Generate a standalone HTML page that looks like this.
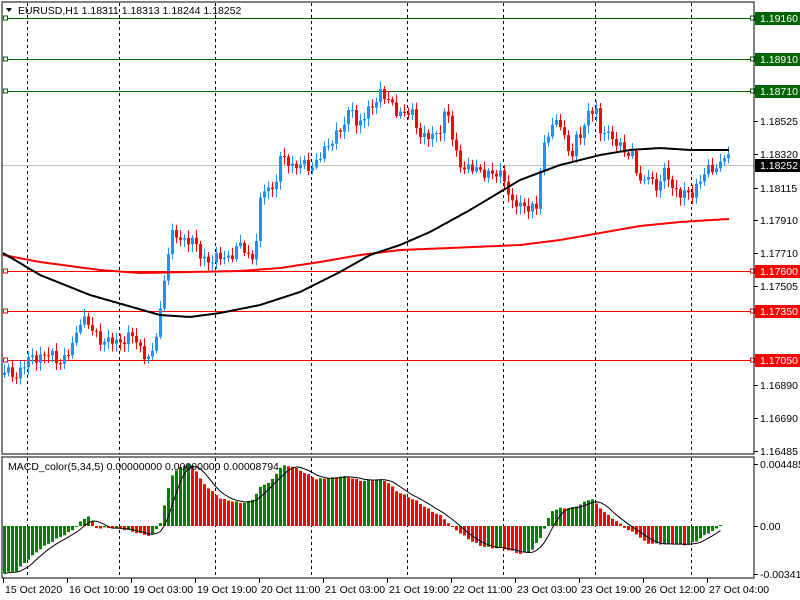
<!DOCTYPE html>
<html><head><meta charset="utf-8">
<style>
html,body{margin:0;padding:0;background:#fff;width:800px;height:600px;overflow:hidden}
svg{display:block;font-family:"Liberation Sans","DejaVu Sans",sans-serif;font-size:10.5px}
</style></head>
<body>
<svg id="s" width="800" height="600" xmlns="http://www.w3.org/2000/svg">
<rect width="800" height="600" fill="#fff"/>
<g id="grid"></g>
<g id="lines"></g>
<g id="candles"></g>
<g id="ma"></g>
<g id="macd"></g>
<g id="frame">
<rect x="2" y="2" width="752" height="452" fill="none" stroke="#000" stroke-width="1"/>
<rect x="2" y="457" width="752" height="121" fill="none" stroke="#000" stroke-width="1"/>
</g>
<g id="labels"></g>
<text x="18" y="14" fill="#000">EURUSD,H1  1.18311 1.18313 1.18244 1.18252</text>
<path d="M6 8 L12 8 L9 12 Z" fill="#000"/>
<text x="8" y="470" fill="#000">MACD_color(5,34,5) 0.00000000 0.00000000 0.00008794</text>
</svg>
<script>
var NS="http://www.w3.org/2000/svg";
function el(p,t,a,txt){var e=document.createElementNS(NS,t);for(var k in a)e.setAttribute(k,a[k]);if(txt!=null)e.textContent=txt;document.getElementById(p).appendChild(e);return e;}
function interp(pts,x){if(x<=pts[0][0])return pts[0][1];for(var i=1;i<pts.length;i++){if(x<=pts[i][0]){var a=pts[i-1],b=pts[i];return a[1]+(b[1]-a[1])*(x-a[0])/(b[0]-a[0]);}}return pts[pts.length-1][1];}
[27,119,215,311,407,503,595,691].forEach(function(x){
el("grid","line",{x1:x+.5,y1:3,x2:x+.5,y2:454,stroke:"#000","stroke-dasharray":"3,3","stroke-width":1});
el("grid","line",{x1:x+.5,y1:458,x2:x+.5,y2:578,stroke:"#000","stroke-dasharray":"3,3","stroke-width":1});
});
el("lines","line",{x1:3,y1:165.5,x2:754,y2:165.5,stroke:"#c0c0c0"});
[[18,"#006400"],[59,"#006400"],[91,"#006400"],[271,"#ff0000"],[311,"#ff0000"],[360,"#ff0000"]].forEach(function(l){
el("lines","line",{x1:3,y1:l[0]+.5,x2:754,y2:l[0]+.5,stroke:l[1]});
el("lines","rect",{x:3.5,y:l[0]-2,width:4,height:4,fill:"#fff",stroke:l[1]});
el("lines","rect",{x:750.5,y:l[0]-2,width:4,height:4,fill:"#fff",stroke:l[1]});
});
var C=[[3,372],[15,375],[30,357],[50,355],[60,362],[70,350],[80,315],[90,330],[100,340],[115,343],[130,335],[140,350],[150,360],[155,335],[160,305],[165,260],[170,235],[180,240],[190,238],[200,258],[210,260],[220,258],[230,255],[240,245],[250,260],[255,240],[260,195],[265,185],[272,190],[280,157],[285,160],[290,165],[300,165],[310,168],[315,160],[325,150],[335,132],[345,125],[350,100],[355,125],[365,115],[372,105],[378,90],[385,100],[395,110],[405,115],[410,112],[415,125],[420,135],[428,138],[435,135],[440,125],[445,105],[450,135],[455,155],[460,165],[470,170],[480,170],[490,175],[495,176],[502,172],[505,185],[510,205],[515,205],[525,205],[535,210],[540,160],[545,135],[550,125],[560,125],[565,145],[570,155],[575,140],[580,138],[585,115],[590,108],[595,110],[598,140],[603,130],[610,135],[615,143],[620,150],[628,155],[633,150],[636,178],[642,190],[645,170],[650,178],[655,188],[660,178],[665,172],[670,185],[680,195],[690,195],[695,185],[700,178],[705,172],[712,168],[718,165],[722,155],[726,157],[729,165]];
var prev=interp(C,3)+3,i=0;
for(var x=3;x<=729;x+=4){i++;
var c=interp(C,x)+4*Math.sin(i*2.3)+2.5*Math.sin(i*5.1);
var o=prev;var hi=Math.min(o,c)-2-Math.abs(6*Math.sin(i*1.7));var lo=Math.max(o,c)+2+Math.abs(6*Math.sin(i*3.3));
var col=c<o?"#1e90ff":"#ff0000";
el("candles","line",{x1:x+1.5,y1:hi,x2:x+1.5,y2:lo,stroke:col});
el("candles","rect",{x:x,y:Math.min(o,c),width:3,height:Math.max(1,Math.abs(o-c)),fill:col});
prev=c;}
function pl(pts,col){var d="";for(var x=3;x<=729;x+=2)d+=(x==3?"M":"L")+x+" "+interp(pts,x).toFixed(1);el("ma","path",{d:d,fill:"none",stroke:col,"stroke-width":2});}
pl([[3,255],[40,262],[100,270],[140,273],[190,272],[240,271],[280,268],[320,262],[360,255],[400,250],[450,248],[520,245],[560,240],[600,233],[640,226],[680,222],[728,219]],"#ff0000");
pl([[3,253],[40,275],[90,295],[160,315],[190,317],[220,313],[260,305],[300,292],[340,272],[370,255],[400,245],[430,232],[470,210],[520,180],[560,165],[600,155],[630,150],[660,148],[690,150],[728,150]],"#000");
var M=[[3,47],[15,45],[25,35],[40,22],[55,13],[70,5],[80,-5],[87,-10],[95,2],[105,2],[115,2],[125,4],[140,8],[150,10],[155,3],[160,-5],[165,-30],[170,-50],[180,-60],[190,-62],[195,-55],[200,-45],[210,-35],[220,-27],[230,-25],[240,-23],[250,-25],[260,-40],[270,-45],[280,-60],[290,-60],[300,-55],[315,-47],[330,-48],[340,-50],[350,-48],[360,-45],[375,-47],[385,-45],[395,-35],[405,-30],[415,-25],[430,-15],[440,-10],[450,0],[460,8],[470,15],[480,20],[490,22],[500,22],[510,25],[520,28],[530,25],[540,10],[550,-15],[560,-18],[570,-18],[580,-22],[590,-28],[595,-22],[605,-12],[615,-5],[625,3],[635,8],[645,17],[655,18],[665,18],[675,18],[685,19],[695,15],[705,8],[715,3],[722,-5]];
var z=526,vals=[],pv=null,j=0;
for(var x=3;x<=722;x+=4){j++;var v=interp(M,x)+0.6*Math.sin(j*2.1);vals.push([x,v]);
var col=(pv===null||v<pv)?"#008000":"#ff0000";
el("macd","rect",{x:x,y:Math.min(z,z+v),width:3,height:Math.max(1,Math.abs(v)),fill:col});pv=v;}
var d="";for(var k=0;k<vals.length;k++){var s=0,n=0;for(var m=Math.max(0,k-4);m<=k;m++){s+=vals[m][1];n++;}d+=(k?"L":"M")+(vals[k][0]+1.5)+" "+(z+s/n).toFixed(1);}
el("macd","path",{d:d,fill:"none",stroke:"#000","stroke-width":1});
[[121,"1.18525"],[154,"1.18320"],[188,"1.18115"],[220,"1.17910"],[253,"1.17710"],[286,"1.17505"],[385,"1.16890"],[418,"1.16690"],[451,"1.16485"],[464,"0.0044854"],[526,"0.00"],[574,"-0.003418"]].forEach(function(t){
el("labels","line",{x1:754,y1:t[0]+.5,x2:758,y2:t[0]+.5,stroke:"#000"});
el("labels","text",{x:760,y:t[0]+4,fill:"#000"},t[1]);});
[[18,"1.19160","#006400"],[59,"1.18910","#006400"],[91,"1.18710","#006400"],[165,"1.18252","#000"],[271,"1.17600","#ff0000"],[311,"1.17350","#ff0000"],[360,"1.17050","#ff0000"]].forEach(function(t){
el("labels","rect",{x:755,y:t[0]-6,width:45,height:13,fill:t[2]});
el("labels","text",{x:760,y:t[0]+4,fill:"#fff"},t[1]);});
[[3,"15 Oct 2020"],[67,"16 Oct 10:00"],[131,"19 Oct 03:00"],[195,"19 Oct 19:00"],[259,"20 Oct 11:00"],[323,"21 Oct 03:00"],[387,"21 Oct 19:00"],[451,"22 Oct 11:00"],[515,"23 Oct 03:00"],[579,"23 Oct 19:00"],[643,"26 Oct 12:00"],[707,"27 Oct 04:00"]].forEach(function(t){
el("labels","line",{x1:t[0]+.5,y1:578,x2:t[0]+.5,y2:583,stroke:"#000"});
el("labels","text",{x:t[0]+2,y:593,fill:"#000"},t[1]);});
</script>
</body></html>
